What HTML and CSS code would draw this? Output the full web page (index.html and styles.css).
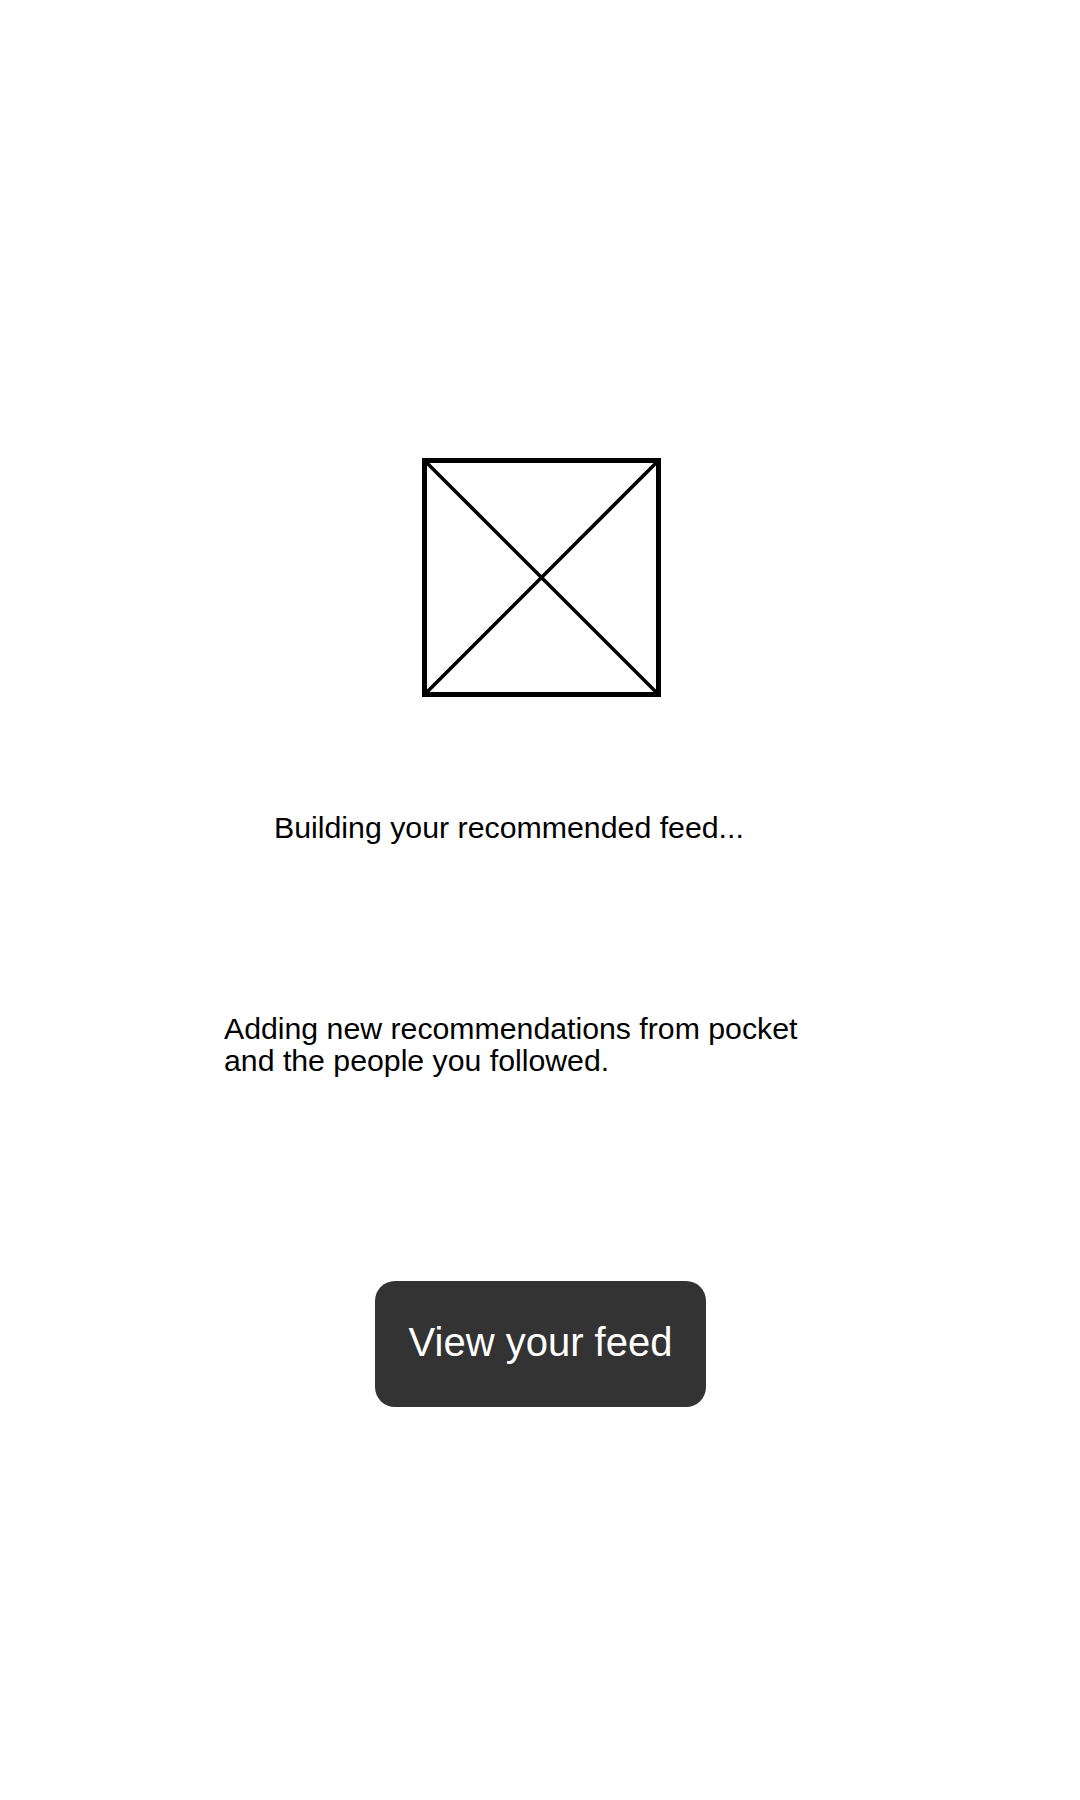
FILE: index.html
```html
<!DOCTYPE html>
<html lang="en">
<head>
<meta charset="utf-8">
<title>Building your feed</title>
<link rel="stylesheet" href="styles.css">
</head>
<body>
<main class="screen">
  <svg class="illus" width="239" height="239" viewBox="0 0 239 239" aria-hidden="true">
    <rect x="2.5" y="2.5" width="234" height="234" fill="none" stroke="#000" stroke-width="5"/>
    <line x1="3" y1="3" x2="236" y2="236" stroke="#000" stroke-width="3.6"/>
    <line x1="236" y1="3" x2="3" y2="236" stroke="#000" stroke-width="3.6"/>
  </svg>
  <p class="title">Building your recommended feed...</p>
  <p class="subtitle">Adding new recommendations from pocket<br>and the people you followed.</p>
  <button class="cta" type="button">View your feed</button>
</main>
</body>
</html>
```
FILE: styles.css
```css
html, body {
  margin: 0;
  padding: 0;
  background: #ffffff;
}
body {
  font-family: "Liberation Sans", Arial, sans-serif;
  color: #000;
}
.screen {
  width: 1080px;
  min-height: 1800px;
  display: flex;
  flex-direction: column;
  align-items: center;
  padding-top: 458px;
  box-sizing: border-box;
}
.illus {
  display: block;
  margin-left: 3px;
}
.title {
  align-self: flex-start;
  margin: 114px 0 0 274px;
  font-size: 30.3px;
  line-height: 34px;
}
.subtitle {
  align-self: flex-start;
  margin: 168px 0 0 224px;
  font-size: 30.25px;
  line-height: 32px;
}
.cta {
  margin-top: 204px;
  margin-left: 1px;
  width: 331px;
  height: 126px;
  border: none;
  border-radius: 20px;
  background: #333333;
  color: #ffffff;
  font-family: "Liberation Sans", Arial, sans-serif;
  font-size: 40px;
  display: flex;
  align-items: center;
  justify-content: center;
  padding: 0 0 4px 0;
}
```
